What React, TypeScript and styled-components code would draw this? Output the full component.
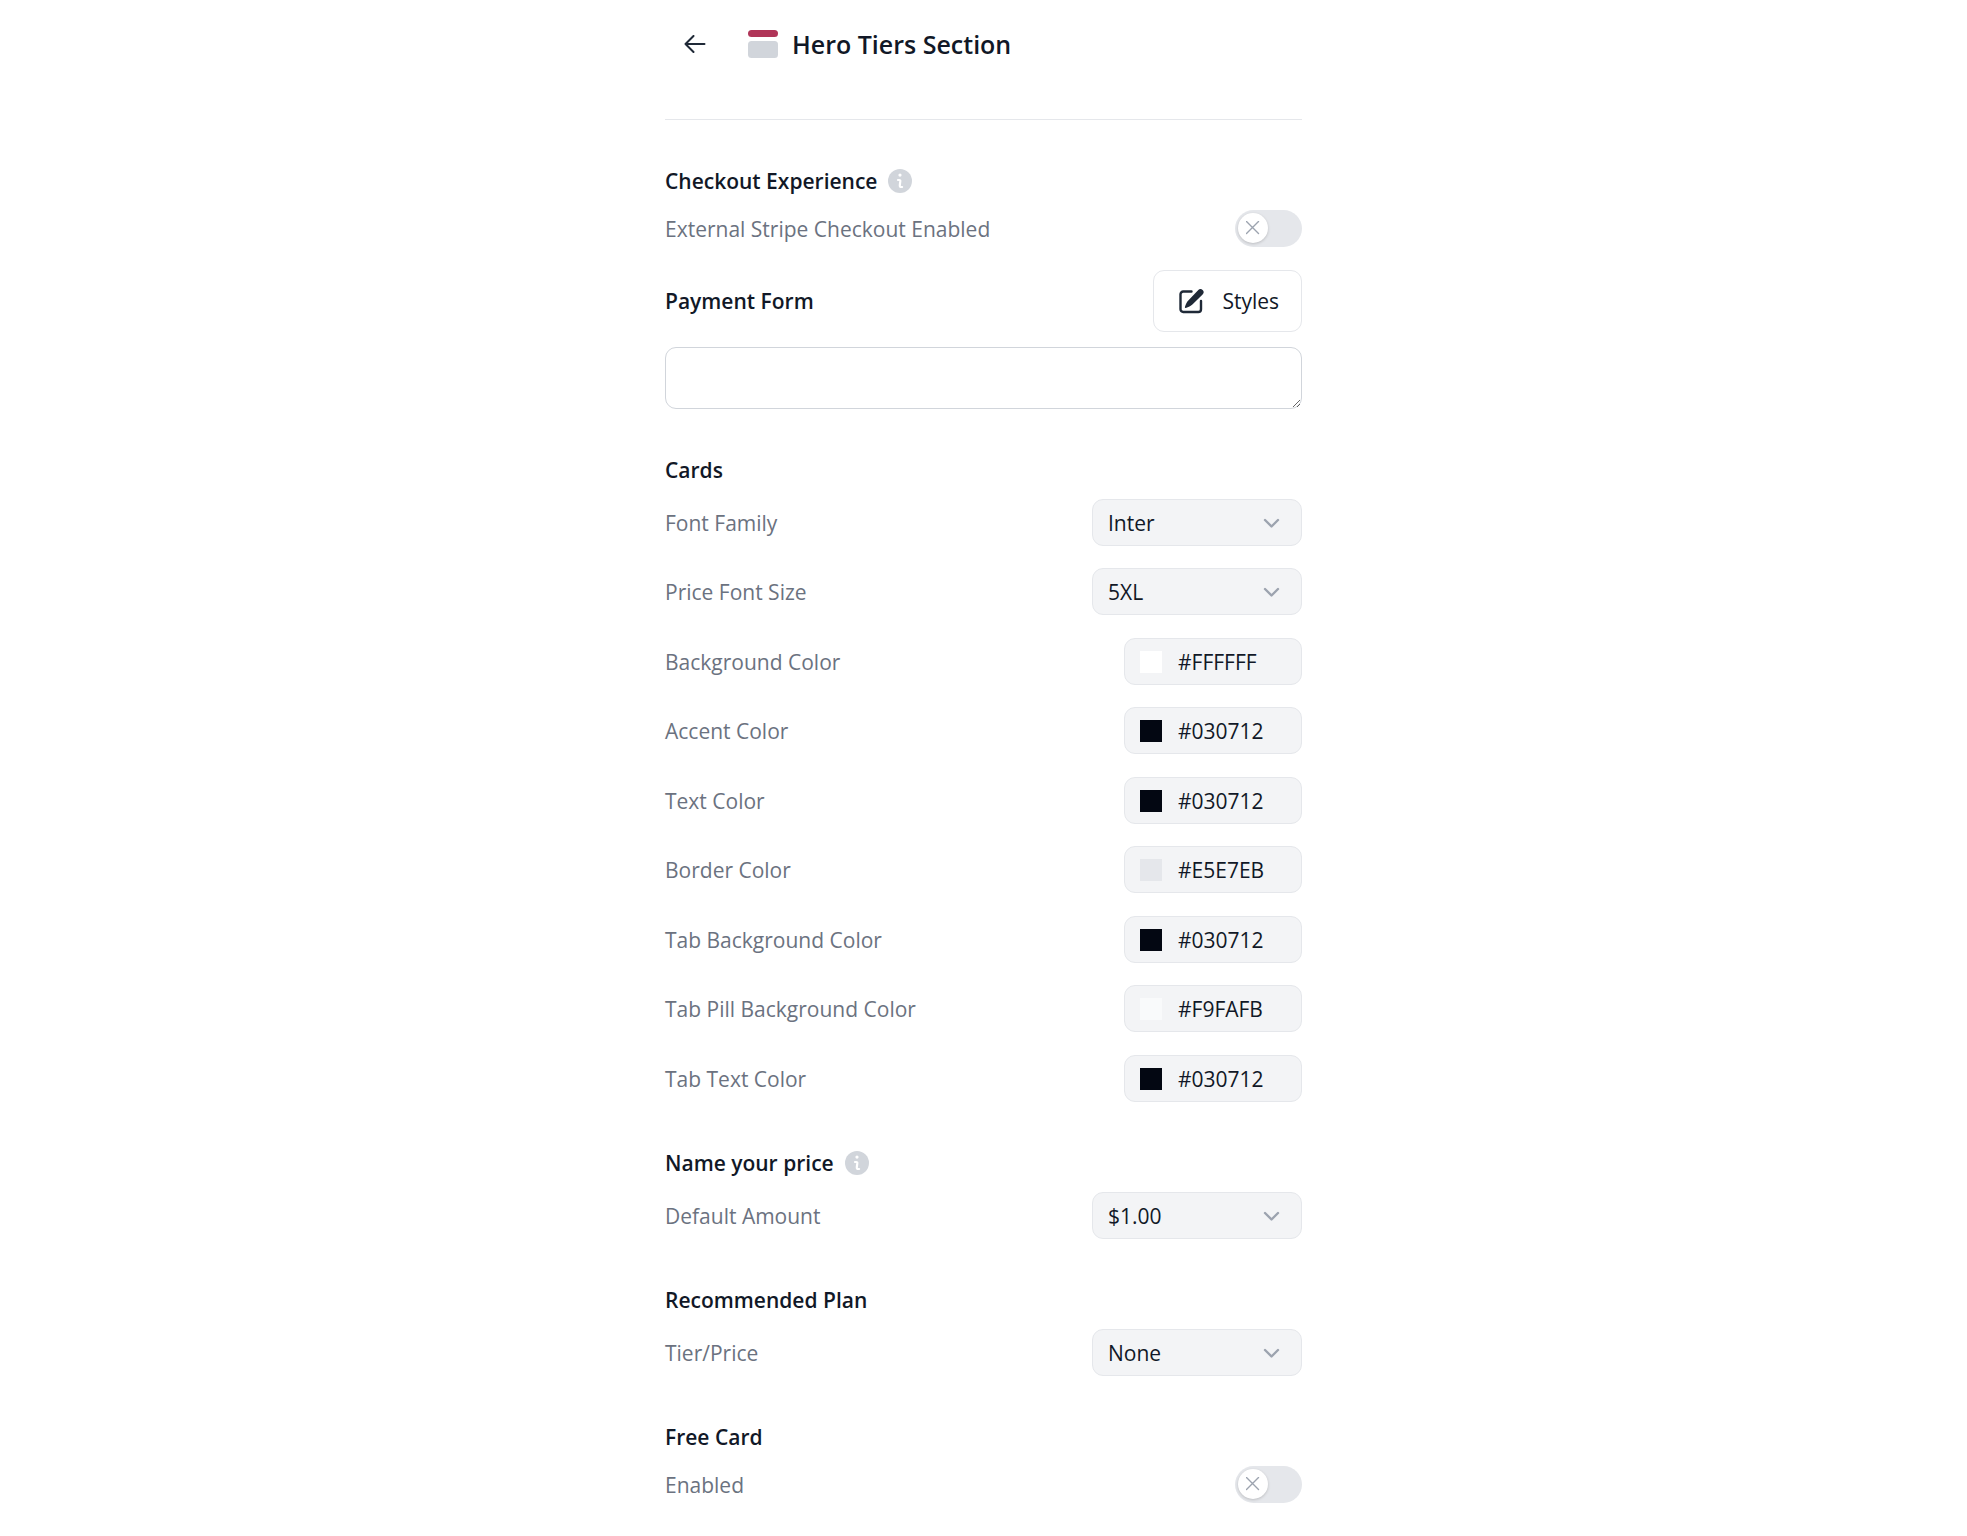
import React, { useId, useState } from "react";
import styled, { createGlobalStyle } from "styled-components";

const GlobalStyle = createGlobalStyle`
  *, *::before, *::after { box-sizing: border-box; }
  body {
    margin: 0;
    background: #ffffff;
    color: #111827;
    font-family: "Segoe UI", "Open Sans", "Noto Sans", sans-serif;
    font-size: 21px;
    line-height: 34px;
  }
  button, input, select, textarea { font: inherit; color: inherit; margin: 0; }
`;

const Page = styled.main`
  width: 100%;
  max-width: 637px;
  margin: 0 auto;
  padding: 14px 0 33px;
  display: flex;
  flex-direction: column;
  gap: 45px;
`;

const Header = styled.header`
  display: flex;
  align-items: center;
  padding-bottom: 46px;
  border-bottom: 1px solid #e5e7eb;
`;

const BackButton = styled.button`
  display: flex;
  align-items: center;
  justify-content: center;
  width: 59px;
  height: 59px;
  margin-right: 24px;
  padding: 0;
  border: 0;
  background: none;
  color: #1f2937;
  cursor: pointer;
`;

const Title = styled.h1`
  margin: 0 0 0 14px;
  font-size: 25px;
  font-weight: 600;
`;

const Section = styled.section`
  display: flex;
  flex-direction: column;
`;

const Heading = styled.h2`
  display: flex;
  align-items: center;
  gap: 11px;
  margin: 0 0 13px;
  font-size: 21px;
  line-height: 32px;
  font-weight: 600;
`;

const SubHeading = styled.label`
  font-weight: 600;
`;

const Rows = styled.div`
  display: flex;
  flex-direction: column;
`;

const Row = styled.div`
  display: flex;
  align-items: center;
  justify-content: space-between;

  & + & { margin-top: 22px; }
  &:nth-child(odd):not(:first-child) { margin-top: 23px; }
`;

const FormRow = styled(Row)`
  margin: 23px 0 15px;
`;

const Label = styled.label`
  color: #6b7280;
`;

const StylesButton = styled.button`
  display: flex;
  align-items: center;
  gap: 18px;
  height: 62px;
  padding: 0 22px 0 25px;
  border: 1px solid #e5e7eb;
  border-radius: 11px;
  background: #ffffff;
  cursor: pointer;
`;

const TextArea = styled.textarea`
  display: block;
  width: 100%;
  height: 62px;
  padding: 11px 16px;
  border: 1px solid #d1d5db;
  border-radius: 11px;
  background: #ffffff;
  resize: vertical;
`;

const SelectBox = styled.div`
  position: relative;
  width: 210px;
`;

const Select = styled.select`
  display: block;
  width: 100%;
  height: 47px;
  padding: 0 48px 0 15px;
  appearance: none;
  border: 1px solid #e5e7eb;
  border-radius: 11px;
  background: #f3f4f6;
`;

const Chevron = styled.svg`
  position: absolute;
  right: 22px;
  top: 19px;
  pointer-events: none;
`;

const ColorBox = styled.div`
  display: flex;
  align-items: center;
  gap: 16px;
  width: 178px;
  height: 47px;
  padding: 0 15px;
  border: 1px solid #e5e7eb;
  border-radius: 11px;
  background: #f3f4f6;
`;

const Swatch = styled.input`
  flex: none;
  width: 22px;
  height: 22px;
  padding: 0;
  border: 0;
  appearance: none;
  background: none;
  cursor: pointer;

  &::-webkit-color-swatch-wrapper { padding: 0; }
  &::-webkit-color-swatch { border: 0; border-radius: 0; }
`;

const HexInput = styled.input`
  flex: 1;
  min-width: 0;
  height: 34px;
  padding: 0;
  border: 0;
  background: transparent;
  outline: none;
`;

const ToggleTrack = styled.span`
  position: relative;
  width: 67px;
  height: 37px;
  border-radius: 19px;
  background: #e5e7eb;

  &:has(input:checked) { background: #b03558; }
`;

const ToggleInput = styled.input`
  position: absolute;
  inset: 0;
  width: 100%;
  height: 100%;
  opacity: 0;
  cursor: pointer;
`;

const Knob = styled.span<{ $on: boolean }>`
  position: absolute;
  top: 3px;
  left: ${(p) => (p.$on ? "34px" : "3px")};
  display: flex;
  align-items: center;
  justify-content: center;
  width: 30px;
  height: 30px;
  border-radius: 50%;
  background: #ffffff;
  box-shadow: 0 1px 3px rgba(0, 0, 0, 0.18);
  pointer-events: none;
`;

const InfoIcon = () => (
  <svg width="24" height="24" viewBox="0 0 24 24" fill="none" aria-hidden="true">
    <circle cx="12" cy="12" r="12" fill="#d1d5db" />
    <circle cx="12" cy="6.1" r="1.6" fill="#fff" />
    <path d="M10 11h1.2q1.4 0 1.1 1.4l-.5 3.8q-.2 1.8 1.4 1.8h.9" stroke="#fff" strokeWidth="2.2" strokeLinecap="round" />
  </svg>
);

const SectionIcon = () => (
  <svg width="30" height="28" viewBox="0 0 30 28" aria-hidden="true">
    <rect width="30" height="7" rx="3.5" fill="#b03558" />
    <rect y="11" width="30" height="17" rx="3.5" fill="#d1d5db" />
  </svg>
);

const ArrowIcon = () => (
  <svg width="22" height="18" viewBox="0 0 22 18" fill="none" stroke="currentColor" strokeWidth="2" strokeLinecap="round" strokeLinejoin="round" aria-hidden="true">
    <path d="M20.5 9H1.5M9.5 1L1.5 9l8 8" />
  </svg>
);

const EditIcon = () => (
  <svg width="25" height="25" viewBox="0 0 25 25" fill="none" aria-hidden="true">
    <path d="M12.5 2.5H4.2A2.7 2.7 0 0 0 1.5 5.2v15.1A2.7 2.7 0 0 0 4.2 23h15.1a2.7 2.7 0 0 0 2.7-2.7V12" stroke="#1f2937" strokeWidth="2.4" strokeLinecap="round" />
    <path d="M23.6 1.1a3 3 0 0 1 0 4.3L13.4 15.6c-1.6 1.6-4 2.7-6.6 3.4-.6.2-1.1-.3-.9-.9.7-2.6 1.8-5 3.4-6.6L19.3 1.1a3 3 0 0 1 4.3 0Z" fill="#1f2937" />
  </svg>
);

function Toggle({ label }: { label: string }) {
  const id = useId();
  const [on, setOn] = useState(false);
  return (
    <Row>
      <Label htmlFor={id}>{label}</Label>
      <ToggleTrack>
        <ToggleInput id={id} type="checkbox" role="switch" checked={on} onChange={(e) => setOn(e.target.checked)} />
        <Knob $on={on}>
          <svg width="14" height="14" viewBox="0 0 14 14" stroke="#9ca3af" strokeWidth="1.4" strokeLinecap="round" aria-hidden="true">
            <path d="M.5 .5l12 12M12.5 .5l-12 12" />
          </svg>
        </Knob>
      </ToggleTrack>
    </Row>
  );
}

function SelectRow({ label, options }: { label: string; options: string[] }) {
  const id = useId();
  return (
    <Row>
      <Label htmlFor={id}>{label}</Label>
      <SelectBox>
        <Select id={id}>
          {options.map((o) => (
            <option key={o}>{o}</option>
          ))}
        </Select>
        <Chevron width="17" height="11" viewBox="0 0 17 11" fill="none" stroke="#9ca3af" strokeWidth="2.4" strokeLinecap="round" strokeLinejoin="round" aria-hidden="true">
          <path d="M2 2l6.5 6.5L15 2" />
        </Chevron>
      </SelectBox>
    </Row>
  );
}

function ColorRow({ label, initial }: { label: string; initial: string }) {
  const id = useId();
  const [color, setColor] = useState(initial);
  return (
    <Row>
      <Label htmlFor={id}>{label}</Label>
      <ColorBox>
        <Swatch type="color" aria-label={`${label} picker`} value={color.toLowerCase()} onChange={(e) => setColor(e.target.value.toUpperCase())} />
        <HexInput id={id} type="text" value={color} onChange={(e) => setColor(e.target.value)} />
      </ColorBox>
    </Row>
  );
}

const cardColors = [
  ["Background Color", "#FFFFFF"],
  ["Accent Color", "#030712"],
  ["Text Color", "#030712"],
  ["Border Color", "#E5E7EB"],
  ["Tab Background Color", "#030712"],
  ["Tab Pill Background Color", "#F9FAFB"],
  ["Tab Text Color", "#030712"],
];

export default function App() {
  return (
    <>
      <GlobalStyle />
      <Page>
        <Header>
          <BackButton type="button" aria-label="Back">
            <ArrowIcon />
          </BackButton>
          <SectionIcon />
          <Title>Hero Tiers Section</Title>
        </Header>

        <Section>
          <Heading>
            Checkout Experience
            <InfoIcon />
          </Heading>
          <Rows>
            <Toggle label="External Stripe Checkout Enabled" />
          </Rows>
          <FormRow>
            <SubHeading htmlFor="payment-form">Payment Form</SubHeading>
            <StylesButton type="button">
              <EditIcon />
              Styles
            </StylesButton>
          </FormRow>
          <TextArea id="payment-form" />
        </Section>

        <Section>
          <Heading>Cards</Heading>
          <Rows>
            <SelectRow label="Font Family" options={["Inter", "Roboto", "Lato"]} />
            <SelectRow label="Price Font Size" options={["5XL", "4XL", "3XL"]} />
            {cardColors.map(([label, value]) => (
              <ColorRow key={label} label={label} initial={value} />
            ))}
          </Rows>
        </Section>

        <Section>
          <Heading>
            Name your price
            <InfoIcon />
          </Heading>
          <Rows>
            <SelectRow label="Default Amount" options={["$1.00", "$5.00", "$10.00"]} />
          </Rows>
        </Section>

        <Section>
          <Heading>Recommended Plan</Heading>
          <Rows>
            <SelectRow label="Tier/Price" options={["None"]} />
          </Rows>
        </Section>

        <Section>
          <Heading>Free Card</Heading>
          <Rows>
            <Toggle label="Enabled" />
          </Rows>
        </Section>
      </Page>
    </>
  );
}
